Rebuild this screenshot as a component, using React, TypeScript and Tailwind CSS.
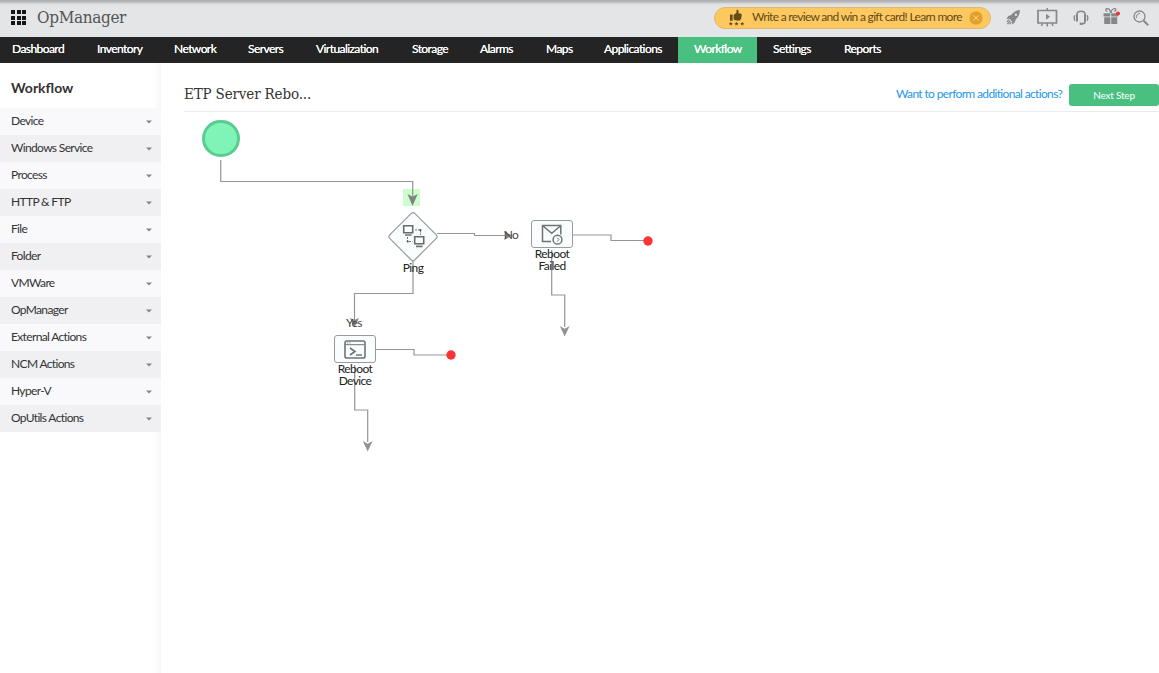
import React from "react";

const nav: [string, string][] = [
  ["Dashboard", "w-[85px]"],
  ["Inventory", "w-[77px]"],
  ["Network", "w-[74px]"],
  ["Servers", "w-[68px]"],
  ["Virtualization", "w-[96px]"],
  ["Storage", "w-[68px]"],
  ["Alarms", "w-[66px]"],
  ["Maps", "w-[58px]"],
  ["Applications", "w-[90px]"],
  ["Workflow", "w-[79px] bg-[#49bf80]"],
  ["Settings", "w-[71px]"],
  ["Reports", "w-[70px]"],
];

const actions = [
  "Device", "Windows Service", "Process", "HTTP & FTP", "File", "Folder",
  "VMWare", "OpManager", "External Actions", "NCM Actions", "Hyper-V", "OpUtils Actions",
];

function ThumbsUp() {
  return (
    <svg width="18" height="18" viewBox="0 0 18 18" fill="#634a18">
      <path d="M2 5.500h2.600v6.200H2zM5.600 6 8.500 3.800V1.300c0-1 2-.9 2.100.7v2.400h2.200c.8 0 1 .9.7 1.500.4.5.3 1.100-.1 1.500.3.6.1 1.200-.3 1.500.2.7-.1 1.200-.5 1.400 0 .9-.4 1.300-1.100 1.300H8.200L5.600 10.600z" />
      <path d="m2.800 12.800.6 1.200 1.400.1-1 .9.3 1.400-1.300-.7-1.200.7.3-1.400-1.100-.9 1.400-.1zM8.500 12.800l.6 1.200 1.400.1-1 .9.3 1.400-1.300-.7-1.200.7.2-1.400-1-.9 1.400-.1zM14.200 12.800l.6 1.200 1.400.1-1 .9.3 1.400-1.300-.7-1.200.7.3-1.400-1.100-.9 1.400-.1z" />
    </svg>
  );
}

function Rocket() {
  return (
    <svg width="15" height="17" viewBox="0 0 15 17" fill="#858789">
      <path fillRule="evenodd" d="M13.800 1C9.800 1.300 7 3.600 5.200 6.100L2.300 7 .4 10.100l3-.4 2.900 3-.3 2.900 2.800-2.100.8-3C12.200 8.300 14.100 5.100 13.800 1zM9.900 4.600a1.200 1.200 0 1 1 0 2.400 1.200 1.200 0 0 1 0-2.400z" />
      <path d="M3 10.800.8 12.900M4.200 11.900 1.400 15M5.300 13.200 3.500 15.300" stroke="#858789" strokeWidth="1.200" />
    </svg>
  );
}

function Presentation() {
  return (
    <svg width="21" height="19" viewBox="0 0 21 19" fill="none" stroke="#858789">
      <path d="M1 2.500h18.500v12.500H1z" strokeWidth="1.700" />
      <path d="M10.300 0v2M5.500 15.500l-1 2.500M10.300 15v3.500M15 15.500l1 2.500" strokeWidth="1.500" />
      <path d="m9 5.700 4 3-4 3z" fill="#858789" stroke="none" />
    </svg>
  );
}

function Headset() {
  return (
    <svg width="16" height="16" viewBox="0 0 16 16" fill="none" stroke="#858789">
      <path d="M4 5V4.200c0-4 8-4 8 0V12c0 1.200-1 1.700-3 1.700" strokeWidth="1.600" />
      <path d="M4 4.500v7M12 4.500v7" strokeWidth="2" />
      <path d="M2.300 5.500C.8 6 .8 10 2.300 10.500M13.700 5.500c1.500.5 1.500 4.500 0 5" strokeWidth="1.400" />
      <path d="M6.700 13.800h3" strokeWidth="2.300" />
    </svg>
  );
}

function Gift() {
  return (
    <svg width="18" height="18" viewBox="0 0 18 18" fill="#858789">
      <path d="M.5 6.200h6.800v3.300H.5zM8.200 6.200H15v3.300H8.200zM1.200 10.200h6.100V17H1.200zM8.200 10.200h6V17h-6z" />
      <path d="M7.400 6V4.500C6.800 2.500 5 1.300 3.500 1.700c-1.300.6-.7 2.600.9 2.300M8.200 6V4.500c.6-2 2.500-3.200 4-2.800 1.300.6.700 2.600-.9 2.300" fill="none" stroke="#858789" strokeWidth="1.300" />
      <circle cx="15" cy="6.500" r="2" fill="#f52f36" />
    </svg>
  );
}

function Search() {
  return (
    <svg width="16" height="16" viewBox="0 0 16 16" fill="none" stroke="#858789">
      <circle cx="6.500" cy="6.500" r="5.500" strokeWidth="1.300" />
      <path d="M3.500 8C2.800 5.500 4.300 3.600 7 3.500" strokeWidth="1" />
      <path d="m10.700 10.700 4.500 4.500" strokeWidth="2" />
    </svg>
  );
}

function Wires() {
  return (
    <svg className="absolute left-0 top-0" width="998" height="561" viewBox="161 112 998 561" fill="none" stroke="#939596" strokeWidth="1.200">
      <rect x="403" y="189" width="17" height="17" fill="#ccfdcc" stroke="none" />
      <path d="M220.700 160v21.500h192V198M437 233.500h37.500v2H505M413 261v32.500h-58.500V320M573 235h38v5.500h37M376 349.500h38v5.500h37M551.700 250v45h13v32M354.700 365v45h13v32" />
      <g fill="#808283" stroke="none">
        <path d="m407.500 194 5 2.700 5.200-2.700-5.200 12z" />
        <path d="m504 231 8 4.500-8 4.500 2-4.500z" />
        <path d="m350 318 4.500 2 4.500-2-4.500 9z" />
      </g>
      <g fill="#929494" stroke="none">
        <path d="m559.800 326 4.900 2.700 4.900-2.700-4.900 10.500z" />
        <path d="m362.800 441 4.900 2.700 4.900-2.700-4.900 10.500z" />
      </g>
      <circle cx="648" cy="241" r="4.700" fill="#fd3434" stroke="none" />
      <circle cx="451" cy="355" r="4.700" fill="#fd3434" stroke="none" />
    </svg>
  );
}

function PingNode() {
  return (
    <svg className="absolute left-[226px] top-[99px]" width="52" height="52" viewBox="387 211 52 52" fill="none" stroke="#707475">
      <path d="M411.500 213.200q1.500-1.200 3 0l22 22q1.300 1.500 0 3l-22 22q-1.500 1.300-3 0l-22-22q-1.300-1.500 0-3z" fill="#fafdfd" stroke="#999c9c" strokeWidth="1.200" />
      <path d="M403.700 225.700h9v7h-9zM414.700 236.700h9v7h-9z" strokeWidth="1.600" fill="#fff" stroke="#676b6c" />
      <path d="M405 235h6.500M416 246.300h6.500" strokeWidth="1.700" />
      <path d="M415 230h5.500v5M407.500 237v4.500h5" strokeDasharray="2 1" />
      <circle cx="420.500" cy="230" r="1.100" fill="#555" stroke="none" />
      <circle cx="407.700" cy="241.500" r="1.100" fill="#555" stroke="none" />
    </svg>
  );
}

function MailIcon() {
  return (
    <svg width="22" height="21" viewBox="0 0 22 21" fill="none" stroke="#6e7374" strokeWidth="1.500">
      <path d="M10 17.500H1.500V1.500h18.300v9M1.700 1.700l9 7.600 9-7.600" />
      <circle cx="16.500" cy="15.700" r="4.400" fill="#fff" />
      <path d="m16 13.700 2 2-2 2" strokeWidth="1" />
    </svg>
  );
}

function TerminalIcon() {
  return (
    <svg width="22" height="19" viewBox="0 0 22 19" fill="none" stroke="#6e7374" strokeWidth="1.600">
      <rect x="1" y="1" width="20" height="17" rx="1.800" />
      <path d="M1.500 4.700h19" strokeWidth="1" />
      <path d="M3 2.900h4" strokeWidth=".8" strokeDasharray="1 .7" />
      <path d="m6 8 5 3.500L6 15M12 15h6" />
    </svg>
  );
}

export default function App() {
  return (
    <div className="flex h-[673px] w-[1159px] flex-col overflow-hidden bg-white font-['Lato',sans-serif] text-[12px] text-[#333]">
      <header className="flex h-[37px] shrink-0 items-start bg-[linear-gradient(#aaa_0,#bbb_2px,#dedfe0_4px,#e4e5e7_7px,#e4e5e7_100%)]">
        <div className="mt-[10px] ml-[11px] grid w-[15px] grid-cols-[4px_4px_4px] gap-x-[1.500px] gap-y-[1.500px]">
          {Array.from({ length: 9 }, (_, i) => <i key={i} className="size-[4px] bg-[#151515]" />)}
        </div>
        <span className="mt-[5px] ml-[11px] w-[677px] font-['DejaVu_Serif_Condensed','DejaVu_Serif',serif] text-[17px] leading-[24px] tracking-[-0.35px] text-[#555]">OpManager</span>
        <div className="mt-[7px] flex h-[22px] w-[277px] shrink-0 items-center rounded-full border border-[#e4b766] bg-[#fdc860] pl-[13px] text-[#634a18]">
          <ThumbsUp />
          <span className="-mt-[2px] ml-[6px] w-[217px] shrink-0 whitespace-nowrap tracking-[-0.7px]">Write a review and win a gift card! Learn more</span>
          <svg className="-mt-px shrink-0" width="14" height="14" viewBox="0 0 14 14"><circle cx="7" cy="7" r="6.700" fill="#e1a12b" /><path d="m4.500 4.500 5 5m0-5-5 5" stroke="#fdd58a" /></svg>
        </div>
        <div className="mt-[9px] ml-[15px] flex items-start">
          <div className="w-[31px]"><Rocket /></div>
          <div className="-mt-px w-[36px]"><Presentation /></div>
          <div className="mt-px w-[30px]"><Headset /></div>
          <div className="-mt-[2px] w-[30px]"><Gift /></div>
          <div className="mt-px"><Search /></div>
        </div>
      </header>
      <nav className="flex h-[26px] shrink-0 bg-[#242424] text-white">
        <div className="-ml-[4px] flex">
          {nav.map(([label, cls]) => <a key={label} className={"block whitespace-nowrap pl-[16px] leading-[24px] tracking-[-0.57px] [text-shadow:0_0_0.5px_#fff] " + cls}>{label}</a>)}
        </div>
      </nav>
      <div className="flex min-h-0 flex-1">
        <aside className="w-[161px] shrink-0 bg-[linear-gradient(to_right,#fff_0,#fff_154px,#f6f6f6_161px)]">
          <h2 className="h-[45px] pl-[11px] text-[14px] leading-[50px] font-bold">Workflow</h2>
          {actions.map((a, i) => (
            <div key={a} className={"flex h-[27px] items-center justify-between pr-[9px] pl-[11px] tracking-[-0.65px] " + (i % 2 ? "bg-[#f0f0f2]" : "bg-[#f9f9fb]")}>
              <span className="-mt-px">{a}</span>
              <svg width="6" height="4" viewBox="0 0 6 4"><path d="M0 .5h6l-3 3z" fill="#858585" /></svg>
            </div>
          ))}
        </aside>
        <main className="flex flex-1 flex-col">
          <div className="ml-[23px] flex h-[49px] shrink-0 items-start border-b border-[#ececec]">
            <h1 className="w-[712px] pt-[19px] font-['DejaVu_Serif_Condensed','DejaVu_Serif',serif] text-[15px] leading-[24px] tracking-[-0.15px]">ETP Server Rebo...</h1>
            <a className="mt-[22px] w-[173px] whitespace-nowrap leading-[18px] tracking-[-0.65px] text-[#2697e8]">Want to perform additional actions?</a>
            <button className="mt-[21px] h-[22px] w-[90px] rounded-[3px] bg-[#49bf80] text-[10px] tracking-[-0.2px] text-white">Next Step</button>
          </div>
          <div className="relative flex-1 text-center leading-[12px] tracking-[-0.6px] text-[#222]">
            <div className="absolute left-[41px] top-[8px] h-[37px] w-[38px] rounded-full border-[3px] border-[#57cd91] bg-[#80f4b7]" />
            <Wires />
            <PingNode />
            <span className="absolute left-[232px] top-[150px] w-[40px]">Ping</span>
            <span className="absolute left-[334px] top-[117px] w-[32px] text-[#444]">No</span>
            <span className="absolute left-[177px] top-[205px] w-[32px] text-[#444]">Yes</span>
            <div className="absolute left-[370px] top-[108px] flex h-[28px] w-[42px] items-center justify-center rounded-[3px] border border-[#979b9b] bg-[#fafdfd]"><MailIcon /></div>
            <span className="absolute left-[361px] top-[136px] w-[60px]">Reboot<br />Failed</span>
            <div className="absolute left-[173px] top-[223px] flex h-[28px] w-[42px] items-center justify-center rounded-[3px] border border-[#979b9b] bg-[#fafdfd]"><TerminalIcon /></div>
            <span className="absolute left-[164px] top-[251px] w-[60px]">Reboot<br />Device</span>
          </div>
        </main>
      </div>
    </div>
  );
}
